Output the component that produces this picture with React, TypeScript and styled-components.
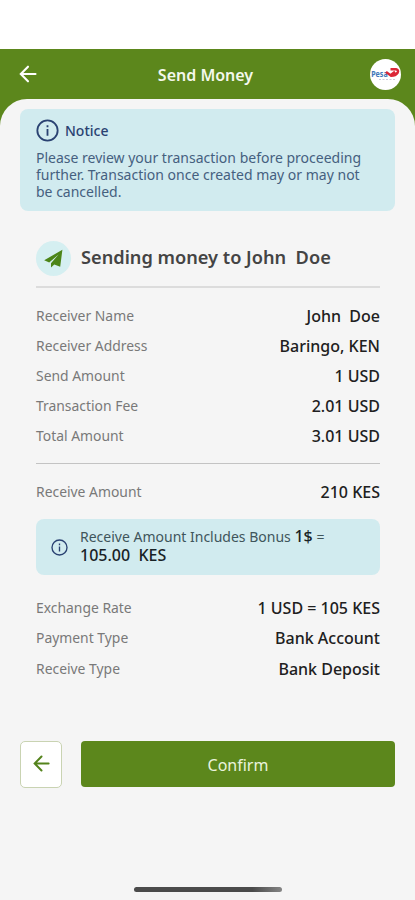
import React from "react";
import styled, { createGlobalStyle } from "styled-components";

const GlobalStyle = createGlobalStyle`
  * { box-sizing: border-box; }
  body { margin: 0; background: #f5f5f5; font-family: "Noto Sans", "Open Sans", sans-serif; }
  button { font-family: inherit; padding: 0; cursor: pointer; }
`;

const Screen = styled.div`
  width: 100%;
  max-width: 415px;
  height: 900px;
  display: flex;
  flex-direction: column;
  background: #5c871c;
  overflow: hidden;
`;

const StatusBar = styled.div`
  height: 49px;
  flex: none;
  background: #fff;
`;

const Header = styled.header`
  height: 50px;
  flex: none;
  display: grid;
  grid-template-columns: 58px 1fr 62px;
  align-items: center;
`;

const HeaderBack = styled.button`
  justify-self: start;
  display: flex;
  margin-left: 18px;
  border: 0;
  background: none;
  color: #fff;
`;

const HeaderTitle = styled.h1`
  margin: 2px 0 0;
  text-align: center;
  color: #f4f8ec;
  font-size: 16px;
  font-weight: 600;
  line-height: 22px;
`;

const Avatar = styled.div`
  justify-self: end;
  width: 31px;
  height: 31px;
  margin-right: 14px;
  border-radius: 50%;
  overflow: hidden;
  background: #fff;
`;

const Sheet = styled.main`
  flex: 1;
  display: flex;
  flex-direction: column;
  padding: 10px 20px 0;
  border-radius: 27px 27px 0 0;
  background: #f5f5f5;
`;

const Notice = styled.section`
  height: 102px;
  padding: 10px 16px 0;
  border-radius: 8px;
  background: #d1ebef;
  color: #45607f;
`;

const NoticeHeading = styled.div`
  display: flex;
  align-items: center;
  gap: 6px;
  height: 23px;
  color: #2a4272;
  font-size: 14px;
  font-weight: 500;
`;

const NoticeText = styled.p`
  margin: 7px 0 0;
  font-size: 14px;
  line-height: 17px;
  white-space: nowrap;
`;

const Details = styled.section`
  padding: 0 15px 0 16px;
`;

const Recipient = styled.div`
  display: flex;
  align-items: center;
  gap: 10px;
  height: 77px;
  padding-top: 20px;
  border-bottom: 2px solid #dcdcdc;
`;

const RecipientBadge = styled.div`
  display: flex;
  align-items: center;
  justify-content: center;
  width: 35px;
  height: 35px;
  border-radius: 50%;
  background: #d5eff1;
`;

const RecipientTitle = styled.h2`
  margin: 0 0 3px;
  color: #444;
  font-size: 18.2px;
  font-weight: 600;
  line-height: 26px;
  white-space: pre;
`;

const RowGroup = styled.dl<{ $top: number; $bottom?: number; $ruled?: boolean }>`
  margin: 0;
  padding: ${(p) => p.$top}px 0 ${(p) => p.$bottom ?? 0}px;
  border-bottom: ${(p) => (p.$ruled ? "1px solid #c3c3c3" : "0")};
`;

const Row = styled.div`
  display: flex;
  align-items: center;
  justify-content: space-between;
  height: 30.2px;
`;

const Label = styled.dt`
  color: #797979;
  font-size: 13.9px;
  line-height: 20px;
`;

const Value = styled.dd`
  margin: 0;
  color: #202020;
  font-size: 16px;
  font-weight: 500;
  line-height: 20px;
  white-space: pre;
`;

const Bonus = styled.div`
  display: flex;
  align-items: center;
  gap: 12px;
  height: 56px;
  padding: 0 15px;
  border-radius: 8px;
  background: #d1ebef;
  color: #2a4272;
`;

const BonusText = styled.p`
  margin: 0 0 2px;
  color: #40555b;
  font-size: 14px;
  line-height: 18px;
  white-space: pre;
`;

const BonusAmount = styled.strong`
  color: #182226;
  font-size: 16px;
  font-weight: 500;
`;

const Actions = styled.div`
  display: flex;
  gap: 19px;
  margin-top: 57px;
`;

const BackButton = styled.button`
  display: flex;
  align-items: center;
  justify-content: center;
  width: 42px;
  height: 47px;
  border: 1px solid #c9d3b2;
  border-radius: 5px;
  background: #fff;
  color: #54831c;
  padding-bottom: 2px;
`;

const ConfirmButton = styled.button`
  flex: 1;
  height: 46px;
  padding-top: 2px;
  border: 0;
  border-radius: 4px;
  background: #5c871c;
  color: #eaf3dc;
  font-size: 16px;
`;

const HomeIndicator = styled.div`
  width: 148px;
  height: 5px;
  margin: auto auto 8px 114px;
  border-radius: 3px;
  background: linear-gradient(90deg, #4b4b4b 80%, #858585);
`;

const ArrowIcon = ({ size = 20 }: { size?: number }) => (
  <svg width={size} height={size} viewBox="0 0 20 20" fill="none" stroke="currentColor" strokeWidth="2.1" strokeLinecap="round">
    <path d="M3.5 10H17.5M10 2.7L2.8 10L10 17.3" strokeLinejoin="miter" />
  </svg>
);

const InfoIcon = ({ size, stroke }: { size: number; stroke: number }) => (
  <svg width={size} height={size} viewBox="0 0 24 24" fill="none" stroke="currentColor" strokeWidth={stroke}>
    <circle cx="12" cy="12" r="10.6" />
    <path d="M12 10.5V17.5M12 6.5V8.7" />
  </svg>
);

const PlaneIcon = () => (
  <svg width="19" height="19" viewBox="0 0 19 19" fill="#4c8518">
    <path d="M18.4 0.8L0.2 11.2L5.2 13.4L14.6 5.4L7 14.2V18.4L10.3 15.6L16.2 17.8Z" />
  </svg>
);

const Logo = () => (
  <svg width="31" height="31" viewBox="0 0 31 31">
    <text x="1.2" y="18" fontFamily="Noto Sans, sans-serif" fontSize="8.5" fontWeight="700" fill="#3f78b8" textLength="16.5" lengthAdjust="spacingAndGlyphs">
      Pesa
    </text>
    <path d="M16 13L20.5 16.2L25 12.8M20.5 10.2H26Q29 11 27.6 13.8Q25.5 17 20.5 16.8" fill="none" stroke="#dc2737" strokeWidth="2.5" />
    <path d="M9 20.5H26" stroke="#ccc9d8" strokeWidth="1" strokeDasharray="2 1.5" />
  </svg>
);

type Item = [label: string, value: string];

const amounts: Item[] = [
  ["Receiver Name", "John  Doe"],
  ["Receiver Address", "Baringo, KEN"],
  ["Send Amount", "1 USD"],
  ["Transaction Fee", "2.01 USD"],
  ["Total Amount", "3.01 USD"],
];

const received: Item[] = [["Receive Amount", "210 KES"]];

const methods: Item[] = [
  ["Exchange Rate", "1 USD = 105 KES"],
  ["Payment Type", "Bank Account"],
  ["Receive Type", "Bank Deposit"],
];

const Rows = ({ items }: { items: Item[] }) => (
  <>
    {items.map(([label, value]) => (
      <Row key={label}>
        <Label>{label}</Label>
        <Value>{value}</Value>
      </Row>
    ))}
  </>
);

export default function App() {
  return (
    <Screen>
      <GlobalStyle />
      <StatusBar />
      <Header>
        <HeaderBack aria-label="Back">
          <ArrowIcon />
        </HeaderBack>
        <HeaderTitle>Send Money</HeaderTitle>
        <Avatar>
          <Logo />
        </Avatar>
      </Header>
      <Sheet>
        <Notice>
          <NoticeHeading>
            <InfoIcon size={23} stroke={1.9} />
            Notice
          </NoticeHeading>
          <NoticeText>
            Please review your transaction before proceeding
            <br />
            further. Transaction once created may or may not
            <br />
            be cancelled.
          </NoticeText>
        </Notice>
        <Details>
          <Recipient>
            <RecipientBadge>
              <PlaneIcon />
            </RecipientBadge>
            <RecipientTitle>{"Sending money to John  Doe"}</RecipientTitle>
          </Recipient>
          <RowGroup $top={12.6} $bottom={11.4} $ruled>
            <Rows items={amounts} />
          </RowGroup>
          <RowGroup $top={13} $bottom={12}>
            <Rows items={received} />
          </RowGroup>
          <Bonus>
            <InfoIcon size={17} stroke={1.9} />
            <BonusText>
              Receive Amount Includes Bonus <BonusAmount>1$</BonusAmount> =<br />
              <BonusAmount>{"105.00  KES"}</BonusAmount>
            </BonusText>
          </Bonus>
          <RowGroup $top={18}>
            <Rows items={methods} />
          </RowGroup>
        </Details>
        <Actions>
          <BackButton aria-label="Go back">
            <ArrowIcon size={19} />
          </BackButton>
          <ConfirmButton>Confirm</ConfirmButton>
        </Actions>
        <HomeIndicator />
      </Sheet>
    </Screen>
  );
}
